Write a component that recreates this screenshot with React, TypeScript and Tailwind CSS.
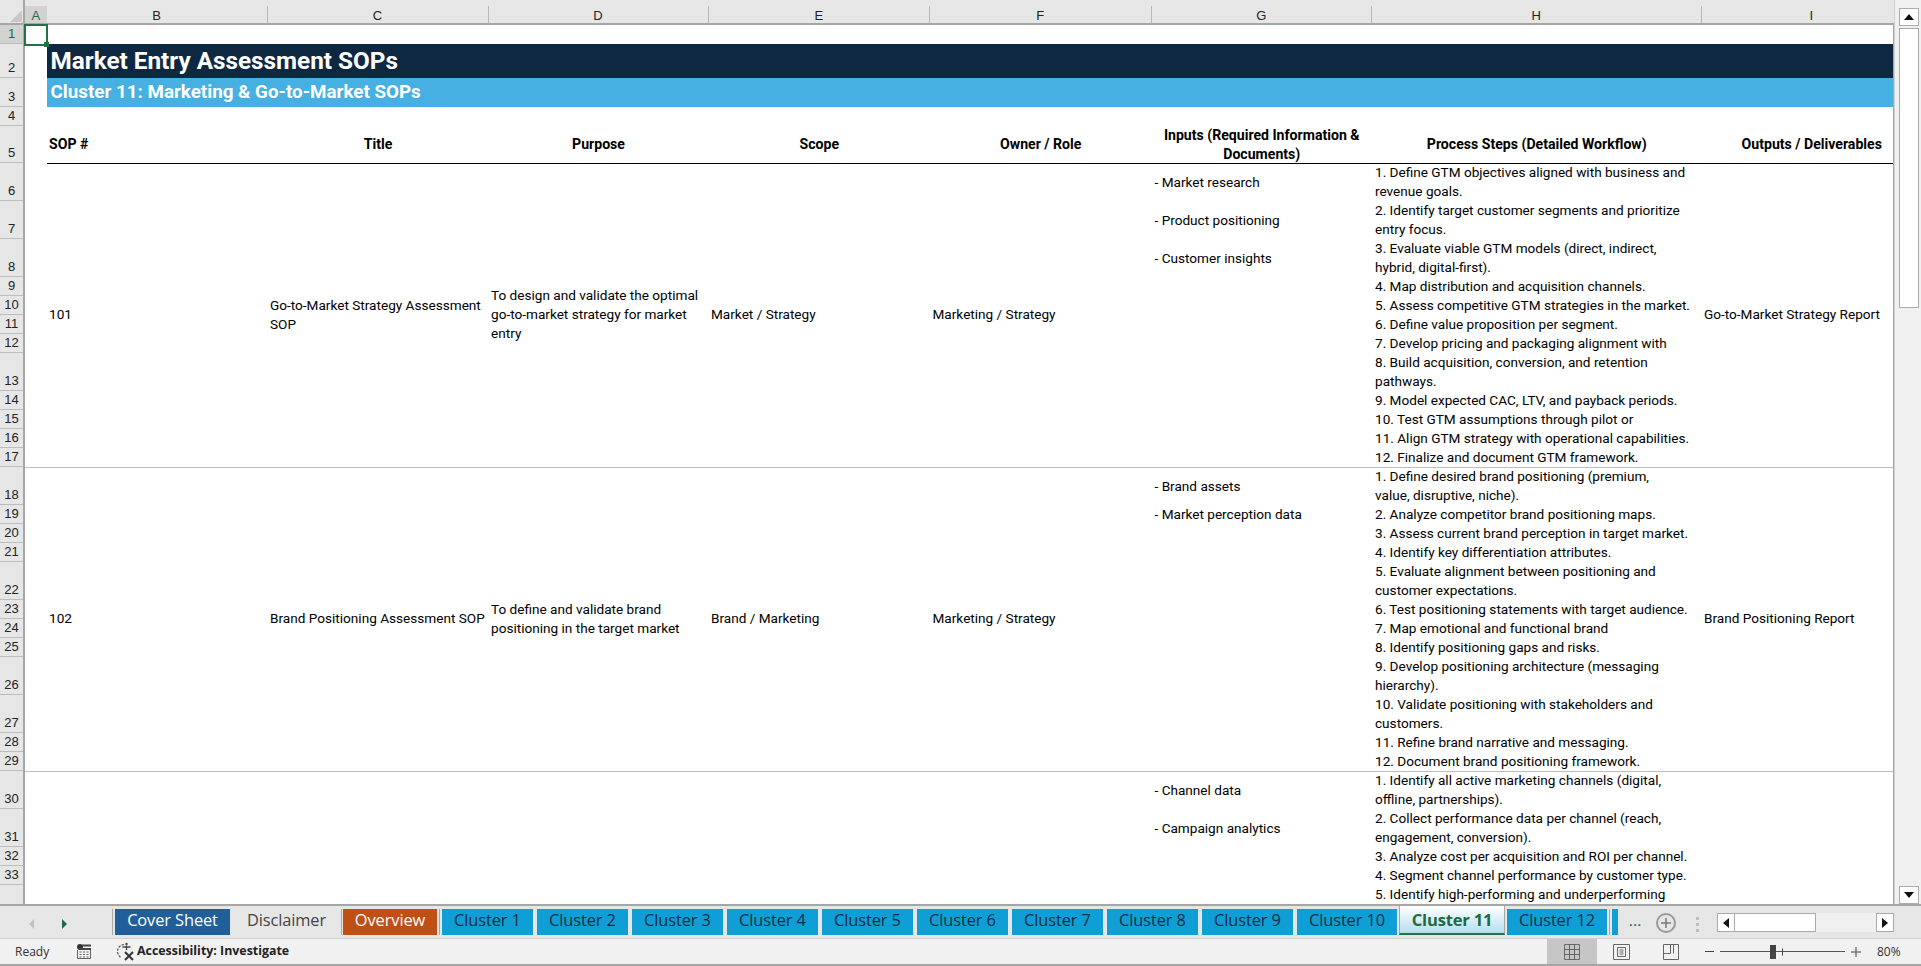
import React from "react";

const cols = "grid grid-cols-[21.5px_221px_221px_220px_221.5px_221.5px_220.5px_329.5px_220.5px]";
const letters = ["A", "B", "C", "D", "E", "F", "G", "H", "I"];

const rows: [string, number][] = [
  ["1", 19], ["2", 34], ["3", 29], ["4", 19], ["5", 37],
  ["6", 38], ["7", 38], ["8", 38], ["9", 19], ["10", 19], ["11", 19], ["12", 19], ["13", 38],
  ["14", 19], ["15", 19], ["16", 19], ["17", 19],
  ["18", 38], ["19", 19], ["20", 19], ["21", 19], ["22", 38], ["23", 19], ["24", 19], ["25", 19],
  ["26", 38], ["27", 38], ["28", 19], ["29", 19],
  ["30", 38], ["31", 38], ["32", 19], ["33", 19], ["", 38],
];

type Sop = {
  id?: string;
  title?: string[];
  purpose?: string[];
  scope?: string;
  owner?: string;
  output?: string;
  inputs: [string, number][];
  steps: string[];
  h: number;
};

const sops: Sop[] = [
  {
    id: "101",
    title: ["Go-to-Market Strategy Assessment", "SOP"],
    purpose: ["To design and validate the optimal", "go-to-market strategy for market", "entry"],
    scope: "Market / Strategy",
    owner: "Marketing / Strategy",
    output: "Go-to-Market Strategy Report",
    inputs: [["- Market research", 38], ["- Product positioning", 38], ["- Customer insights", 38]],
    steps: [
      "1. Define GTM objectives aligned with business and",
      "revenue goals.",
      "2. Identify target customer segments and prioritize",
      "entry focus.",
      "3. Evaluate viable GTM models (direct, indirect,",
      "hybrid, digital-first).",
      "4. Map distribution and acquisition channels.",
      "5. Assess competitive GTM strategies in the market.",
      "6. Define value proposition per segment.",
      "7. Develop pricing and packaging alignment with",
      "8. Build acquisition, conversion, and retention",
      "pathways.",
      "9. Model expected CAC, LTV, and payback periods.",
      "10. Test GTM assumptions through pilot or",
      "11. Align GTM strategy with operational capabilities.",
      "12. Finalize and document GTM framework.",
    ],
    h: 304,
  },
  {
    id: "102",
    title: ["Brand Positioning Assessment SOP"],
    purpose: ["To define and validate brand", "positioning in the target market"],
    scope: "Brand / Marketing",
    owner: "Marketing / Strategy",
    output: "Brand Positioning Report",
    inputs: [["- Brand assets", 38], ["- Market perception data", 19]],
    steps: [
      "1. Define desired brand positioning (premium,",
      "value, disruptive, niche).",
      "2. Analyze competitor brand positioning maps.",
      "3. Assess current brand perception in target market.",
      "4. Identify key differentiation attributes.",
      "5. Evaluate alignment between positioning and",
      "customer expectations.",
      "6. Test positioning statements with target audience.",
      "7. Map emotional and functional brand",
      "8. Identify positioning gaps and risks.",
      "9. Develop positioning architecture (messaging",
      "hierarchy).",
      "10. Validate positioning with stakeholders and",
      "customers.",
      "11. Refine brand narrative and messaging.",
      "12. Document brand positioning framework.",
    ],
    h: 304,
  },
  {
    inputs: [["- Channel data", 38], ["- Campaign analytics", 38]],
    steps: [
      "1. Identify all active marketing channels (digital,",
      "offline, partnerships).",
      "2. Collect performance data per channel (reach,",
      "engagement, conversion).",
      "3. Analyze cost per acquisition and ROI per channel.",
      "4. Segment channel performance by customer type.",
      "5. Identify high-performing and underperforming",
    ],
    h: 135,
  },
];

function Centered({ children }: { children?: React.ReactNode }) {
  return <div className="flex flex-col justify-center pl-[2.5px] pb-[2px] whitespace-nowrap">{children}</div>;
}

function SopRow({ s }: { s: Sop }) {
  return (
    <div className={`${cols} ${s.id ? "border-b border-[#bdbdbd]" : ""} box-border`} style={{ height: s.h }}>
      <div />
      <Centered>{s.id}</Centered>
      <Centered>{s.title?.map((t) => <div key={t} className="leading-[19px]">{t}</div>)}</Centered>
      <Centered>{s.purpose?.map((t) => <div key={t} className="leading-[19px]">{t}</div>)}</Centered>
      <Centered>{s.scope}</Centered>
      <Centered>{s.owner}</Centered>
      <div className="flex flex-col pl-[3px] -mt-[1px] whitespace-nowrap">
        {s.inputs.map(([t, h]) => (
          <div key={t} className="flex items-center" style={{ height: h }}>{t}</div>
        ))}
      </div>
      <div className="flex flex-col pl-[3px] -mt-[1px] whitespace-nowrap">
        {s.steps.map((t) => (
          <div key={t} className="h-[19px] leading-[19px]">{t}</div>
        ))}
      </div>
      <Centered>{s.output}</Centered>
    </div>
  );
}

function Tab({ label, className, text }: { label: string; className: string; text: string }) {
  return (
    <div className={`h-[26px] flex items-center justify-center pb-[3px] text-[16.4px] tracking-[-0.1px] font-['Open_Sans',sans-serif] ${className} ${text}`}>
      {label}
    </div>
  );
}

const Sep = () => <div className="w-px h-[26px] bg-[#a8a8a8]" />;

function ArrowBtn({ dir }: { dir: "l" | "r" }) {
  return (
    <div className="w-[18px] h-[19px] bg-white border border-[#ababab] box-border flex items-center justify-center shrink-0">
      <svg width="6" height="10" viewBox="0 0 6 10">
        <path d={dir === "l" ? "M6 0L0 5l6 5z" : "M0 0l6 5-6 5z"} fill="#111" />
      </svg>
    </div>
  );
}

export default function App() {
  return (
    <div className="w-[1921px] h-[966px] flex flex-col overflow-hidden bg-white text-black font-['Roboto',sans-serif] text-[13.6px]">
      <div className="flex h-[906px] border-b-2 border-[#a6a6a6] box-border">
        <div className="w-[1894px] flex flex-col relative overflow-hidden">
          {/* column header */}
          <div className="flex h-[25px] bg-[#e6e6e6] border-b-2 border-[#a6a6a6] box-border shrink-0 overflow-hidden">
            <div className="w-[25px] h-[23px] shrink-0 flex items-start justify-start pl-[10px] pt-[10px] border-r-2 border-[#a6a6a6] box-border">
              <svg width="12" height="12" viewBox="0 0 12 12"><path d="M12 0v12H0z" fill="#c8c8c8" /></svg>
            </div>
            <div className={`${cols} flex-1 mt-[6px] font-['Liberation_Sans',sans-serif] text-[13px] text-[#222]`}>
              {letters.map((l, i) => (
                <div
                  key={l}
                  className={
                    i === 0
                      ? "bg-[#d2d2d2] text-[#1d6b41] flex items-center justify-center"
                      : "flex items-center justify-center border-r border-[#b8b8b8]"
                  }
                >
                  {l}
                </div>
              ))}
            </div>
          </div>
          {/* sheet body */}
          <div className="flex flex-1 overflow-hidden">
            <div className="w-[25px] shrink-0 bg-[#e6e6e6] border-r-2 border-[#a6a6a6] box-border font-['Liberation_Sans',sans-serif] text-[13px] text-[#222] overflow-hidden">
              {rows.map(([n, h], i) => (
                <div
                  key={i}
                  style={{ height: h }}
                  className={`box-border flex items-end justify-center border-b border-[#bdbdbd] ${i === 0 ? "bg-[#d2d2d2] text-[#1d6b41]" : ""}`}
                >
                  {n}
                </div>
              ))}
            </div>
            <div className="flex-1 flex flex-col overflow-hidden border-r border-[#a6a6a6]">
              <div className="h-[19px] shrink-0" />
              <div className="h-[34px] shrink-0 ml-[21.5px] bg-[#0e2841] text-white font-bold text-[24.3px] flex items-center pl-[4px] whitespace-nowrap">
                Market Entry Assessment SOPs
              </div>
              <div className="h-[29px] shrink-0 ml-[21.5px] bg-[#45b0e1] text-white font-bold text-[18.8px] flex items-center pl-[4px] whitespace-nowrap">
                Cluster 11: Marketing &amp; Go-to-Market SOPs
              </div>
              <div className="h-[19px] shrink-0" />
              <div className={`${cols} grid-rows-[38px] h-[38px] shrink-0 font-bold box-border text-[14.1px]`}>
                <div />
                <div className="col-span-8 grid grid-cols-subgrid grid-rows-[37px] h-[38px] box-border border-b border-black text-center leading-[19px]">
                  <div className="flex items-center pl-[2.5px]">SOP #</div>
                  <div className="flex items-center justify-center">Title</div>
                  <div className="flex items-center justify-center">Purpose</div>
                  <div className="flex items-center justify-center">Scope</div>
                  <div className="flex items-center justify-center">Owner / Role</div>
                  <div className="flex items-center justify-center">Inputs (Required Information &amp;<br />Documents)</div>
                  <div className="flex items-center justify-center">Process Steps (Detailed Workflow)</div>
                  <div className="flex items-center justify-center">Outputs / Deliverables</div>
                </div>
              </div>
              {sops.map((s, i) => (
                <SopRow key={i} s={s} />
              ))}
            </div>
          </div>
          {/* active cell */}
          <div className="absolute left-[24px] top-[24px] w-[24px] h-[22px] border-2 border-[#217346] box-border">
            <div className="absolute -right-[3px] -bottom-[3px] w-[5px] h-[5px] bg-[#217346]" />
          </div>
        </div>
        {/* vertical scrollbar */}
        <div className="flex-1 bg-[#f0f0f0] border-l border-[#d0d0d0] flex flex-col items-center pt-[8px] pl-[2px]">
          <div className="w-[20px] h-[18px] bg-white border border-[#ababab] flex items-center justify-center shrink-0">
            <svg width="10" height="6" viewBox="0 0 10 6"><path d="M0 6l5-6 5 6z" fill="#111" /></svg>
          </div>
          <div className="w-[20px] h-[280px] mt-[2px] bg-white border border-[#ababab] shrink-0" />
          <div className="flex-1" />
          <div className="w-[20px] h-[18px] bg-white border border-[#ababab] flex items-center justify-center shrink-0">
            <svg width="10" height="6" viewBox="0 0 10 6"><path d="M0 0l5 6 5-6z" fill="#111" /></svg>
          </div>
        </div>
      </div>

      {/* tab bar */}
      <div className="flex h-[32px] bg-[#e6e6e6] items-start shrink-0">
        <div className="w-[112px] h-[29px] flex items-center shrink-0 pl-[29px] gap-[27px] mt-[3px]">
          <svg width="6" height="12" viewBox="0 0 6 12"><path d="M5 1L0 6l5 5z" fill="#c0c0c0" /></svg>
          <svg width="6" height="12" viewBox="0 0 6 12"><path d="M0 1l5 5-5 5z" fill="#1d6b41" /></svg>
        </div>
        <div className="flex items-start pt-[3px]">
          <Sep />
          <div className="w-[2px]" />
          <Tab label="Cover Sheet" className="w-[115px] bg-[#215f9a]" text="text-white" />
          <div className="w-[2px]" />
          <Tab label="Disclaimer" className="w-[109px]" text="text-[#444]" />
          <Sep />
          <div className="w-[1px]" />
          <Tab label="Overview" className="w-[94px] bg-[#c04f15]" text="text-white" />
          <div className="w-[2px]" />
          <Sep />
          <div className="w-[2px]" />
          <div className="flex gap-[4px]">
            {["Cluster 1", "Cluster 2", "Cluster 3", "Cluster 4", "Cluster 5", "Cluster 6", "Cluster 7", "Cluster 8", "Cluster 9"].map((c) => (
              <Tab key={c} label={c} className="w-[91px] bg-[#0f9ed5]" text="text-[#0b2f40]" />
            ))}
            <Tab label="Cluster 10" className="w-[100px] bg-[#0f9ed5]" text="text-[#0b2f40]" />
          </div>
          <div className="w-[2px]" />
          <div className="w-[106px] h-[29px] -mt-[3px] pt-[1px] box-border bg-gradient-to-b from-white to-[#b4deef] border-b-2 border-x border-x-[#a6a6a6] border-b-[#217346] flex items-center justify-center text-[16.6px] font-bold font-['Open_Sans',sans-serif] tracking-[-0.2px] text-[#1d6b41]">
            Cluster 11
          </div>
          <div className="w-[2px]" />
          <Tab label="Cluster 12" className="w-[100px] bg-[#0f9ed5]" text="text-[#0b2f40]" />
          <div className="w-[5px] flex justify-center"><div className="w-px h-[26px] bg-[#a8a8a8]" /></div>
          <div className="w-[6px] h-[26px] bg-[#0f9ed5]" />
          <div className="w-[11px]" />
          <div className="w-[12px] h-[26px] flex items-center text-[#1d6b41] font-bold text-[13px] tracking-[0.5px]">...</div>
          <div className="w-[15px]" />
          <div className="w-[20px] h-[20px] mt-[4px] rounded-full border-2 border-[#9a9a9a] flex items-center justify-center box-border">
            <svg width="10" height="10" viewBox="0 0 10 10"><path d="M5 0v10M0 5h10" stroke="#7a7a7a" strokeWidth="1.5" /></svg>
          </div>
          <div className="w-[20px]" />
          <div className="flex flex-col gap-[3px] mt-[8px]">
            <div className="w-[3px] h-[3px] bg-[#bdbdbd]" />
            <div className="w-[3px] h-[3px] bg-[#bdbdbd]" />
            <div className="w-[3px] h-[3px] bg-[#bdbdbd]" />
          </div>
          <div className="w-[18px]" />
          <div className="flex mt-[4px] w-[177px] bg-[#f0f0f0]">
            <ArrowBtn dir="l" />
            <div className="w-[81px] h-[19px] bg-white border-y border-r border-[#ababab] box-border" />
            <div className="flex-1" />
            <ArrowBtn dir="r" />
          </div>
        </div>
      </div>

      {/* status bar */}
      <div className="flex-1 flex items-stretch bg-[#f1f1f1] border-t border-[#cfcfcf] border-b-2 border-b-[#a6a6a6] box-border font-['Open_Sans',sans-serif] text-[12px] text-[#333]">
        <div className="w-[77px] pl-[15px] flex items-center shrink-0">Ready</div>
        <div className="w-[38px] flex items-center shrink-0">
          <svg width="14" height="15" viewBox="0 0 14 15" fill="none">
            <circle cx="3" cy="3" r="3" fill="#333" />
            <path d="M5 1.5h9M2 5h12" stroke="#444" strokeWidth="2" />
            <path d="M.5 6v8.5h13V6" stroke="#666" />
            <path d="M2.5 8h2M6 8h2M9.5 8h2M2.5 10.5h2M6 10.5h2M9.5 10.5h2M2.5 13h2M6 13h2M9.5 13h2" stroke="#666" />
          </svg>
        </div>
        <div className="flex items-center gap-[1px] font-bold text-[12.4px] text-[#222] shrink-0">
          <svg width="21" height="19" viewBox="0 0 21 19" fill="none">
            <path d="M9 2.5a7 7 0 0 0-3 13" stroke="#555" strokeWidth="1.2" strokeDasharray="2.4 1.2" />
            <circle cx="11.5" cy="2" r="1.2" fill="#444" />
            <path d="M11.5 3.5v4.5M7.5 5h8" stroke="#444" strokeWidth="1.3" />
            <path d="M10 10l8 8M18 10l-8 8" stroke="#333" strokeWidth="2" />
          </svg>
          Accessibility: Investigate
        </div>
        <div className="flex-1" />
        <div className="w-[50px] bg-[#c6c6c6] flex items-center justify-center shrink-0">
          <svg width="16" height="16" viewBox="0 0 16 16" fill="none" stroke="#666" strokeWidth="1">
            <path d="M.5.5h15v15H.5zM.5 5.5h15M.5 10.5h15M5.5.5v15M10.5.5v15" />
          </svg>
        </div>
        <div className="w-[49px] flex items-center justify-center shrink-0">
          <svg width="17" height="16" viewBox="0 0 17 16" fill="none" stroke="#666" strokeWidth="1">
            <path d="M.5.5h16v15H.5zM4.5 3.5h8v9h-8zM6.5 6h4M6.5 8h4M6.5 10h4" />
          </svg>
        </div>
        <div className="w-[50px] flex items-center justify-center shrink-0">
          <svg width="16" height="16" viewBox="0 0 16 16" fill="none" stroke="#666" strokeWidth="1">
            <path d="M.5.5h15v15H.5zM.5 9.5h7V.5M10.5.5v9" />
          </svg>
        </div>
        <div className="w-[8.5px] shrink-0" />
        <div className="w-[9px] flex items-center shrink-0"><div className="w-full h-px bg-[#444]" /></div>
        <div className="w-[6.5px] shrink-0" />
        <div className="relative w-[125px] flex items-center shrink-0">
          <div className="w-full h-px bg-[#555]" />
          <div className="absolute left-[50px] top-1/2 -translate-y-1/2 w-[6px] h-[14px] bg-[#444]" />
          <div className="absolute left-[62px] top-1/2 -translate-y-1/2 w-px h-[7px] bg-[#444]" />
        </div>
        <div className="w-[6px] shrink-0" />
        <div className="w-[10px] flex items-center shrink-0">
          <svg width="10" height="10" viewBox="0 0 10 10"><path d="M5 0v10M0 5h10" stroke="#444" strokeWidth="1" /></svg>
        </div>
        <div className="w-[60px] shrink-0 flex items-center pl-[16px] whitespace-nowrap">80%</div>
      </div>
    </div>
  );
}
